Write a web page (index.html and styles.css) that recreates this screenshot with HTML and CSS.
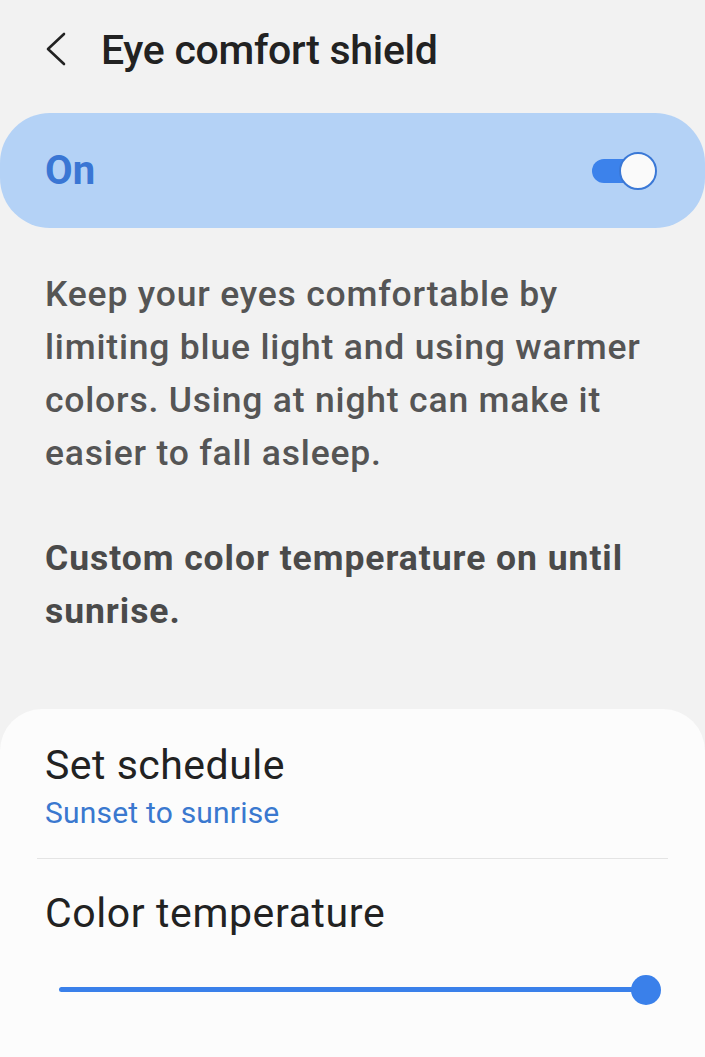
FILE: index.html
```html
<!DOCTYPE html>
<html lang="en">
<head>
<meta charset="utf-8">
<title>Eye comfort shield</title>
<link rel="stylesheet" href="styles.css">
</head>
<body>
<header class="header">
  <span class="back" aria-label="Back">
    <svg width="22" height="36" viewBox="0 0 22 36"><path d="M19 3 L3 18 L19 33" fill="none" stroke="#222" stroke-width="2.6" stroke-linecap="round" stroke-linejoin="round"/></svg>
  </span>
  <h1 class="title">Eye comfort shield</h1>
</header>

<section class="master">
  <span class="master-label">On</span>
  <span class="switch"><span class="switch-track"></span><span class="switch-thumb"></span></span>
</section>

<p class="desc">Keep your eyes comfortable by limiting blue light and using warmer colors. Using at night can make it easier to fall asleep.</p>
<p class="desc desc-bold">Custom color temperature on until sunrise.</p>

<section class="card">
  <div class="item">
    <div class="item-title">Set schedule</div>
    <div class="item-sub">Sunset to sunrise</div>
  </div>
  <div class="divider"></div>
  <div class="item">
    <div class="item-title item-title-wide">Color temperature</div>
    <div class="slider"><span class="slider-track"></span><span class="slider-thumb"></span></div>
  </div>
</section>
</body>
</html>
```

FILE: styles.css
```css
* { box-sizing: border-box; }
html, body { margin: 0; padding: 0; }
body {
  background: #f2f2f2;
  font-family: Roboto, "Liberation Sans", sans-serif;
  width: 705px;
  height: 1057px;
  overflow: hidden;
}
.header {
  height: 100px;
  display: flex;
  align-items: center;
  padding-left: 45px;
}
.back { display: flex; width: 22px; height: 36px; margin-top: -2px; }
.title {
  margin: 0 0 0 34px;
  font-size: 41px;
  font-weight: 500;
  letter-spacing: -0.3px;
  color: #222;
  line-height: 1;
}
.master {
  margin: 13px 0 0 0;
  height: 115px;
  border-radius: 50px;
  background: #b4d2f6;
  display: flex;
  align-items: center;
  justify-content: space-between;
  padding: 0 48px 0 45px;
}
.master-label {
  font-size: 40px;
  font-weight: 700;
  color: #3a76d4;
  letter-spacing: 0.2px;
}
.switch { position: relative; width: 65px; height: 38px; margin-top: 1px; }
.switch-track {
  position: absolute; left: 0; top: 7px;
  width: 60px; height: 24px; border-radius: 12px;
  background: #3c82eb;
}
.switch-thumb {
  position: absolute; right: 0; top: 0;
  width: 38px; height: 38px; border-radius: 50%;
  background: #fafafa;
  border: 2px solid #3a78d6;
}
.desc {
  margin: 40px 40px 0 45px;
  font-size: 35.5px;
  font-weight: 500;
  line-height: 53px;
  letter-spacing: 0.8px;
  color: #555;
}
.desc-bold {
  margin-top: 52px;
  font-weight: 700;
  color: #4a4a4a;
  letter-spacing: 0.95px;
}
.card {
  margin-top: 71px;
  background: #fcfcfc;
  border-radius: 42px 42px 0 0;
  padding: 31px 0 40px 0;
  min-height: 400px;
}
.item { padding: 0 45px; }
.item-title {
  font-size: 41px;
  line-height: 50px;
  letter-spacing: 0.5px;
  color: #222;
}
.item-title-wide { letter-spacing: 0.6px; }
.item-sub {
  margin-top: 3px;
  font-size: 30px;
  line-height: 40px;
  letter-spacing: 0.2px;
  color: #3a78cf;
}
.divider {
  height: 1px;
  background: #e4e4e4;
  margin: 25px 37px 29px 37px;
}
.slider {
  position: relative;
  height: 30px;
  margin: 37px -1px 0 14px;
}
.slider-track {
  position: absolute; left: 0; right: 10px; top: 12px;
  height: 5px; border-radius: 3px;
  background: #3a80ea;
}
.slider-thumb {
  position: absolute; right: 0; top: 0;
  width: 30px; height: 30px; border-radius: 50%;
  background: #3a80ea;
}
```
